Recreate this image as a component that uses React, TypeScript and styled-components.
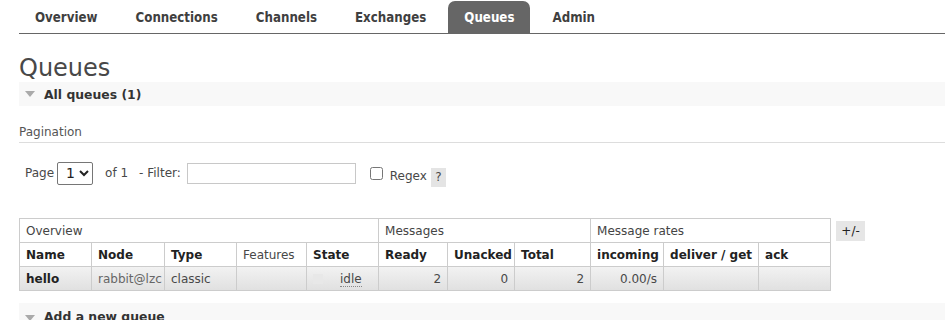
import React from "react";
import styled, { createGlobalStyle } from "styled-components";

const GlobalStyle = createGlobalStyle`
  html, body { margin: 0; padding: 0; background: #fff; }
  body {
    font-family: "DejaVu Sans", Verdana, sans-serif;
    font-size: 12px;
    color: #484848;
    overflow: hidden;
  }
`;

const Page = styled.div`
  padding-left: 19px;
  width: 926px;
  height: 320px;
  overflow: hidden;
`;

const Nav = styled.ul`
  display: flex;
  gap: 6px;
  margin: 0;
  padding: 1px 0 0 0;
  list-style: none;
  border-bottom: 1px solid #666;
`;

const Tab = styled.li<{ $active?: boolean }>`
  height: 31px;
  padding: 1px 16px 0;
  line-height: 31px;
  font-family: "DejaVu Sans Condensed", "DejaVu Sans", sans-serif;
  font-weight: bold;
  font-size: 13.2px;
  color: ${(p) => (p.$active ? "#fff" : "#3f3f3f")};
  background: ${(p) => (p.$active ? "#666" : "transparent")};
  border-radius: 7px 7px 0 0;
`;

const Title = styled.h1`
  margin: 21px 0 0 0;
  font-size: 24px;
  line-height: 27px;
  font-weight: normal;
  color: #484848;
`;

const SectionBar = styled.div`
  display: flex;
  align-items: center;
  gap: 9px;
  height: 24px;
  padding-left: 6px;
  background: #f8f8f8;
  font-weight: bold;
  font-size: 12.4px;
  color: #333;
`;

const Triangle = styled.span<{ $mt?: number }>`
  width: 0;
  height: 0;
  margin-top: ${(p) => p.$mt ?? 0}px;
  border-left: 5px solid transparent;
  border-right: 5px solid transparent;
  border-top: 6px solid #aaa;
`;

const SubHeading = styled.h3`
  margin: 18px 0 0 0;
  padding-bottom: 2px;
  font-size: 12px;
  line-height: 16px;
  font-weight: normal;
  color: #555;
  border-bottom: 1px solid #ddd;
`;

const Controls = styled.div`
  display: flex;
  align-items: center;
  height: 24px;
  margin-top: 18px;
  padding-left: 6px;
`;

const Label = styled.span<{ $ml?: number; $dy?: number }>`
  margin-left: ${(p) => p.$ml ?? 0}px;
  position: relative;
  top: ${(p) => p.$dy ?? 0}px;
  white-space: pre;
`;

const Select = styled.select`
  margin-left: 3px;
  width: 36px;
  height: 23px;
  font-family: "DejaVu Sans", sans-serif;
  font-size: 14px;
  color: #222;
  border: 1px solid #767676;
  border-radius: 2px;
  background: #fff;
  padding: 0 0 0 4px;
`;

const FilterInput = styled.input`
  margin-left: 6px;
  width: 167px;
  height: 19px;
  padding: 0;
  border: 1px solid #c8c8c8;
  border-radius: 0;
`;

const Check = styled.input`
  margin: 0 0 0 14px;
  width: 13px;
  height: 13px;
`;

const Help = styled.span`
  margin-left: 4px;
  width: 15px;
  height: 19px;
  margin-top: 8px;
  background: #e4e4e4;
  color: #484848;
  font-size: 12px;
  display: flex;
  align-items: center;
  justify-content: center;
`;

const TableRow = styled.div`
  display: flex;
  align-items: flex-start;
  gap: 5px;
  margin-top: 33px;
`;

const Table = styled.table`
  border-collapse: collapse;
  table-layout: fixed;
  width: 811px;
`;

const Col = styled.col<{ $w: number }>`
  width: ${(p) => p.$w}px;
`;

const Row = styled.tr`
  height: 24px;
`;

const Cell = styled.td<{ $bold?: boolean; $right?: boolean; $muted?: boolean }>`
  height: 24px;
  padding: 0 6px;
  box-sizing: border-box;
  border: 1px solid #ccc;
  font-weight: ${(p) => (p.$bold ? "bold" : "normal")};
  text-align: ${(p) => (p.$right ? "right" : "left")};
  color: ${(p) => (p.$bold ? "#222" : p.$muted ? "#666" : "#484848")};
  white-space: nowrap;
  overflow: hidden;
`;

const GroupCell = styled(Cell)`
  color: #444;
`;

const DataRow = styled(Row)`
  background: linear-gradient(#f2f2f2, #e0e0e0);
`;

const StateBox = styled.span`
  display: inline-block;
  width: 10px;
  height: 10px;
  background: #e8e8e8;
  vertical-align: middle;
  margin-right: 17px;
`;

const Abbr = styled.abbr`
  text-decoration: none;
  border-bottom: 1px dotted #888;
`;

const Toggle = styled.button`
  margin-top: 3px;
  width: 29px;
  height: 20px;
  padding: 0;
  border: none;
  background: #e6e6e6;
  font-family: "DejaVu Sans", sans-serif;
  font-size: 12px;
  color: #222;
`;

const BottomBar = styled(SectionBar)`
  margin-top: 12px;
  height: 28px;
  align-items: flex-start;
  padding-top: 6px;
`;

const tabs = ["Overview", "Connections", "Channels", "Exchanges", "Queues", "Admin"];
const widths = [72, 73, 72, 70, 72, 69, 67, 76, 73, 95, 72];

export default function App() {
  return (
    <Page>
      <GlobalStyle />
      <Nav>
        {tabs.map((t) => (
          <Tab key={t} $active={t === "Queues"}>
            {t}
          </Tab>
        ))}
      </Nav>
      <Title>Queues</Title>
      <SectionBar>
        <Triangle />
        All queues (1)
      </SectionBar>
      <SubHeading>Pagination</SubHeading>
      <Controls>
        <Label>Page</Label>
        <Select defaultValue="1">
          <option value="1">1</option>
        </Select>
        <Label $ml={12}>of 1</Label>
        <Label $ml={11}>- Filter:</Label>
        <FilterInput type="text" />
        <Check type="checkbox" />
        <Label $ml={7} $dy={3}>Regex</Label>
        <Help>?</Help>
      </Controls>
      <TableRow>
        <Table>
          <colgroup>
            {widths.map((w, i) => (
              <Col key={i} $w={w} />
            ))}
          </colgroup>
          <thead>
            <Row>
              <GroupCell as="th" colSpan={5}>Overview</GroupCell>
              <GroupCell as="th" colSpan={3}>Messages</GroupCell>
              <GroupCell as="th" colSpan={3}>Message rates</GroupCell>
            </Row>
            <Row>
              <Cell as="th" $bold>Name</Cell>
              <Cell as="th" $bold>Node</Cell>
              <Cell as="th" $bold>Type</Cell>
              <Cell as="th">Features</Cell>
              <Cell as="th" $bold>State</Cell>
              <Cell as="th" $bold>Ready</Cell>
              <Cell as="th" $bold>Unacked</Cell>
              <Cell as="th" $bold>Total</Cell>
              <Cell as="th" $bold>incoming</Cell>
              <Cell as="th" $bold>deliver / get</Cell>
              <Cell as="th" $bold>ack</Cell>
            </Row>
          </thead>
          <tbody>
            <DataRow>
              <Cell $bold>hello</Cell>
              <Cell $muted>rabbit@lzc</Cell>
              <Cell>classic</Cell>
              <Cell />
              <Cell>
                <StateBox />
                <Abbr title="idle">idle</Abbr>
              </Cell>
              <Cell $right>2</Cell>
              <Cell $right>0</Cell>
              <Cell $right>2</Cell>
              <Cell $right>0.00/s</Cell>
              <Cell />
              <Cell />
            </DataRow>
          </tbody>
        </Table>
        <Toggle>+/-</Toggle>
      </TableRow>
      <BottomBar>
        <Triangle $mt={6} />
        Add a new queue
      </BottomBar>
    </Page>
  );
}
